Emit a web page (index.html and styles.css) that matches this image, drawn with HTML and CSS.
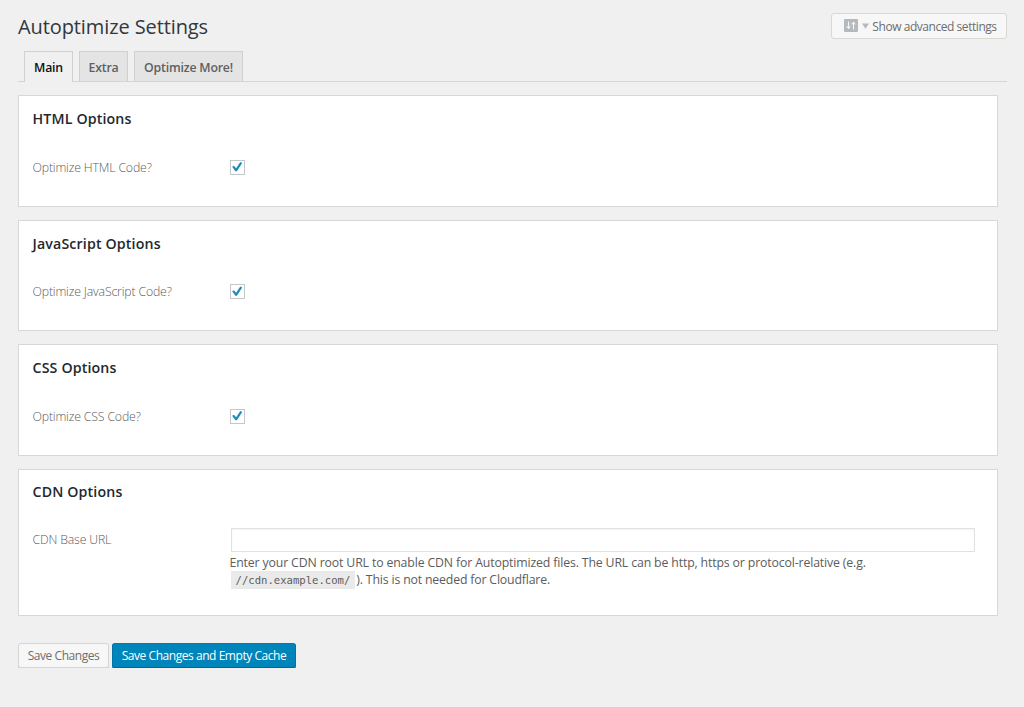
FILE: index.html
```
<!DOCTYPE html>
<html lang="en">
<head>
    <meta charset="UTF-8">
    <meta name="viewport" content="width=device-width, initial-scale=1.0">
    <title>Autoptimize Settings</title>
    <link rel="stylesheet" href="styles.css">
</head>
<body>
    <div class="wrap">
        <div class="header">
            <h1>Autoptimize Settings</h1>
            <button type="button" class="button advanced">
                <svg class="icon-sliders" viewBox="0 0 14 13" width="14" height="13">
                    <rect width="14" height="13" rx="1" fill="#b4b9be"/>
                    <path d="M4.5 2.5v6M9.5 4.5v6" stroke="#f7f7f7" stroke-width="1.1"/>
                    <path d="M2.2 7.5h4.6L4.5 10.3zM7.2 5.3h4.6L9.5 2.5z" fill="#f7f7f7"/>
                </svg>
                <svg class="icon-arrow" viewBox="0 0 8 6" width="7" height="6">
                    <path d="M0 0h8L4 6z" fill="#b4b9be"/>
                </svg>
                <span>Show advanced settings</span>
            </button>
        </div>

        <nav class="tabs">
            <a class="tab tab-main active" href="#">Main</a>
            <a class="tab tab-extra" href="#">Extra</a>
            <a class="tab tab-more" href="#">Optimize More!</a>
        </nav>

        <form>
            <section class="box">
                <h2>HTML Options</h2>
                <div class="row">
                    <label for="opt-html">Optimize HTML Code?</label>
                    <input type="checkbox" id="opt-html" checked>
                </div>
            </section>

            <section class="box">
                <h2>JavaScript Options</h2>
                <div class="row">
                    <label for="opt-js">Optimize JavaScript Code?</label>
                    <input type="checkbox" id="opt-js" checked>
                </div>
            </section>

            <section class="box">
                <h2>CSS Options</h2>
                <div class="row">
                    <label for="opt-css">Optimize CSS Code?</label>
                    <input type="checkbox" id="opt-css" checked>
                </div>
            </section>

            <section class="box box-cdn">
                <h2>CDN Options</h2>
                <div class="row">
                    <label for="cdn-url">CDN Base URL</label>
                    <div class="field">
                        <input type="text" id="cdn-url">
                        <p>Enter your CDN root URL to enable CDN for Autoptimized files. The URL can be http, https or protocol-relative (e.g.<br><code>//cdn.example.com/</code><span class="note">). This is not needed for Cloudflare.</span></p>
                    </div>
                </div>
            </section>

            <div class="submit">
                <button type="button" class="button save">Save Changes</button>
                <button type="button" class="button primary">Save Changes and Empty Cache</button>
            </div>
        </form>
    </div>
</body>
</html>
```

FILE: styles.css
```
* {
    box-sizing: border-box;
}
body {
    margin: 0;
    background-color: #f0f0f0;
    color: #5c5c5c;
    font-family: "Open Sans", "Noto Sans", sans-serif;
    font-size: 12.3px;
}
.wrap {
    padding: 0 17px 0 18px;
}
.header {
    display: flex;
    justify-content: space-between;
    height: 51px;
}
h1 {
    margin: 14px 0 0;
    font-size: 20px;
    font-weight: 400;
    line-height: 26px;
    letter-spacing: -0.1px;
    color: #32373c;
    white-space: nowrap;
}
.button {
    display: flex;
    align-items: center;
    justify-content: center;
    height: 26px;
    padding: 0;
    border: 1px solid #d5d5d5;
    border-radius: 3px;
    background-color: #f7f7f7;
    color: #6e6e6e;
    font-family: inherit;
    font-size: 12px;
    letter-spacing: -0.45px;
    white-space: nowrap;
    box-shadow: 0 1px 0 #d0d0d0;
}
.advanced {
    width: 176px;
    margin-top: 13px;
    padding-left: 2px;
    border-color: #d9d9d3;
    box-shadow: none;
}
.icon-sliders {
    margin: 0 4px 1px 1px;
}
.icon-arrow {
    margin-right: 3px;
}
.tabs {
    display: flex;
    gap: 6px;
    height: 31px;
    padding-left: 6px;
    border-bottom: 1px solid #d5d5d5;
}
.tab {
    height: 30px;
    border: 1px solid #d0d0d0;
    border-bottom: none;
    background-color: #e4e4e4;
    color: #606060;
    font-size: 12.3px;
    font-weight: 600;
    line-height: 31px;
    text-align: center;
    text-decoration: none;
    white-space: nowrap;
    letter-spacing: -0.2px;
}
.tab.active {
    height: 31px;
    background-color: #f0f0f0;
    color: #111;
}
.tab-main {
    width: 49px;
}
.tab-extra {
    width: 49px;
}
.tab-more {
    width: 109px;
}
form {
    padding-top: 13.4px;
}
.box {
    width: 980px;
    height: 111.5px;
    margin-bottom: 13px;
    padding: 12.7px 13.5px 0;
    border: 1px solid #d8d8d8;
    background-color: #fff;
}
h2 {
    margin: 0;
    color: #23282d;
    font-size: 14.2px;
    font-weight: 600;
    line-height: 20px;
    letter-spacing: 0.15px;
}
.row {
    display: flex;
    align-items: flex-start;
    margin-top: 28.5px;
}
.row label {
    width: 197px;
    font-size: 12.3px;
    font-weight: 300;
    line-height: 20px;
    letter-spacing: -0.17px;
    white-space: nowrap;
}
input[type="checkbox"] {
    display: grid;
    place-items: center;
    width: 15px;
    height: 15px;
    margin: 2px 0 0;
    border: 1px solid #c4c8cb;
    background-color: #fff;
    appearance: none;
}
input[type="checkbox"]::before {
    content: "";
    width: 11px;
    height: 11px;
    background-color: #1e8cbe;
    clip-path: polygon(6% 47%, 22% 37%, 42% 60%, 80% 3%, 98% 12%, 49% 89%, 35% 89%);
}
.box-cdn {
    height: 147px;
    padding-top: 12px;
}
.field {
    width: 745px;
}
input[type="text"] {
    display: block;
    width: 744px;
    height: 24px;
    margin: -2.2px 0 0 1px;
    border: 1px solid #e2e2e2;
    background-color: #fff;
    box-shadow: inset 0 1px 2px rgba(0, 0, 0, 0.05);
}
.field p {
    margin: 1.7px 0 0;
    font-size: 12.3px;
    line-height: 17.5px;
    white-space: nowrap;
    letter-spacing: -0.145px;
}
.note {
    letter-spacing: -0.17px;
}
code {
    display: inline-block;
    height: 18px;
    margin: 0 1px;
    padding: 0 5px;
    background-color: #eaeaea;
    font-family: "DejaVu Sans Mono", monospace;
    font-size: 10.6px;
    letter-spacing: 0;
    line-height: 18px;
    vertical-align: top;
}
.submit {
    display: flex;
    gap: 3px;
    margin-top: 27px;
}
.save {
    width: 91px;
    height: 25px;
}
.primary {
    width: 184px;
    height: 25px;
    border-color: #007db1 #0073aa #006799;
    background-color: #0085ba;
    color: #fff;
    box-shadow: 0 1px 0 #2580a8;
}
```
